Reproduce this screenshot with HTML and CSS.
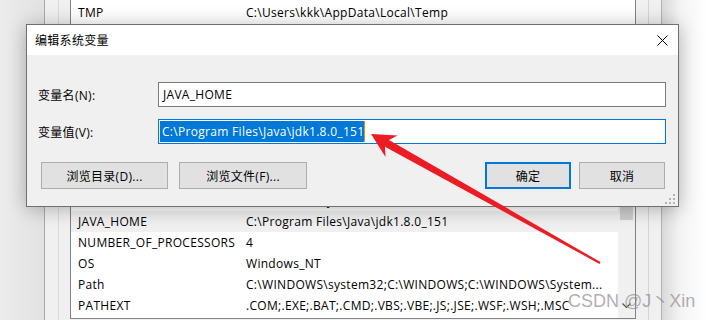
FILE: index.html
```html
<!DOCTYPE html>
<html lang="zh-CN">
<head>
    <meta charset="UTF-8">
    <title>编辑系统变量</title>
    <link rel="stylesheet" href="styles.css">
</head>
<body>

    <div class="screen">
        <div class="shade-left"></div>

        <div class="envwin">
            <div class="group">
                <div class="list user-list">
                    <div class="row"><span class="name">TMP</span><span class="value">C:\Users\kkk\AppData\Local\Temp</span></div>
                </div>

                <div class="list sys-list">
                    <div class="rows">
                        <div class="row"><span class="name">DriverData</span><span class="value">C:\Windows\System32\Drivers\DriverData</span></div>
                        <div class="row selected"><span class="name">JAVA_HOME</span><span class="value">C:\Program Files\Java\jdk1.8.0_151</span></div>
                        <div class="row"><span class="name">NUMBER_OF_PROCESSORS</span><span class="value">4</span></div>
                        <div class="row"><span class="name">OS</span><span class="value">Windows_NT</span></div>
                        <div class="row"><span class="name">Path</span><span class="value">C:\WINDOWS\system32;C:\WINDOWS;C:\WINDOWS\System...</span></div>
                        <div class="row"><span class="name">PATHEXT</span><span class="value">.COM;.EXE;.BAT;.CMD;.VBS;.VBE;.JS;.JSE;.WSF;.WSH;.MSC</span></div>
                    </div>
                    <div class="scrollbar">
                        <div class="thumb"></div>
                        <svg class="down" width="9" height="6" viewBox="0 0 9 6">
                            <path d="M0.5 0.5 L4.5 4.5 L8.5 0.5" fill="none" stroke="#505050" stroke-width="1.2"/>
                        </svg>
                    </div>
                </div>
            </div>
        </div>

        <div class="shade-right"></div>

        <div class="dialog">
            <div class="titlebar">
                <span class="title">编辑系统变量</span>
                <svg class="close" width="11" height="11" viewBox="0 0 11 11">
                    <path d="M0.5 0.5 L10.5 10.5 M10.5 0.5 L0.5 10.5" stroke="#000" stroke-width="1"/>
                </svg>
            </div>
            <div class="dialog-body">
                <div class="field">
                    <label>变量名(N):</label>
                    <div class="textbox">JAVA_HOME</div>
                </div>
                <div class="field">
                    <label>变量值(V):</label>
                    <div class="textbox focused"><span class="selection">C:\Program Files\Java\jdk1.8.0_151</span></div>
                </div>
                <div class="actions">
                    <button class="browse-dir">浏览目录(D)...</button>
                    <button class="browse-file">浏览文件(F)...</button>
                    <div class="spacer"></div>
                    <button class="ok">确定</button>
                    <button class="cancel">取消</button>
                </div>
            </div>
            <svg class="grip" width="10" height="10" viewBox="0 0 10 10">
                <rect x="8" y="0" width="2" height="2" fill="#b4b4b4"/>
                <rect x="4" y="4" width="2" height="2" fill="#b4b4b4"/>
                <rect x="8" y="4" width="2" height="2" fill="#b4b4b4"/>
                <rect x="0" y="8" width="2" height="2" fill="#b4b4b4"/>
                <rect x="4" y="8" width="2" height="2" fill="#b4b4b4"/>
                <rect x="8" y="8" width="2" height="2" fill="#b4b4b4"/>
            </svg>
        </div>

        <svg class="arrow" width="708" height="320" viewBox="0 0 708 320">
            <polygon points="371,134 397.5,135.6 389,140 600.5,262.1 599.5,263.9 385,146.8 385.5,157" fill="#ec1c24"/>
        </svg>

        <div class="watermark">CSDN @J丶Xin</div>
    </div>

</body>
</html>
```

FILE: styles.css
```css
body {
    margin: 0;
    font-family: "Open Sans", "Noto Sans CJK SC", sans-serif;
    font-size: 12px;
    letter-spacing: 0.3px;
    color: #000;
    background: #f0f0f0;
}
.screen {
    position: relative;
    display: flex;
    width: 708px;
    height: 320px;
    overflow: hidden;
}
.shade-left {
    width: 44px;
    background: linear-gradient(to right, #ececec, #e2e2e2);
}
.shade-right {
    width: 46px;
    background: linear-gradient(to right, #d9d9d9, #f4f4f4 40%, #ffffff);
}
.envwin {
    width: 618px;
    box-sizing: border-box;
    background: #f0f0f0;
    border-left: 1px solid #a9a9a9;
    border-right: 1px solid #b3b3b3;
    padding: 0 12px 0 13px;
}
.group {
    height: 100%;
    box-sizing: border-box;
    border-left: 1px solid #dadada;
    border-right: 1px solid #d4d4d4;
    padding: 0 12px 0 11px;
}
.list {
    background: #fff;
    border: 1px solid #828282;
    box-sizing: border-box;
}
.user-list {
    height: 128px;
    border-top: none;
    padding-top: 2px;
}
.sys-list {
    display: flex;
    margin-top: 19px;
    height: 172px;
}
.rows {
    flex: 1;
    overflow: hidden;
    padding-top: 42px;
}
.row {
    display: flex;
    height: 21px;
    line-height: 21px;
    white-space: nowrap;
    overflow: hidden;
}
.row.selected {
    background: #f0f0f0;
}
.name {
    width: 168px;
    padding-left: 7px;
    flex-shrink: 0;
}
.scrollbar {
    position: relative;
    width: 17px;
    background: #f0f0f0;
}
.thumb {
    margin: 14px 2px 0 2px;
    height: 58px;
    background: #cdcdcd;
}
.scrollbar .down {
    position: absolute;
    left: 4px;
    bottom: 9px;
}

.dialog {
    position: absolute;
    left: 26px;
    top: 24px;
    width: 653px;
    height: 183px;
    box-sizing: border-box;
    border: 1px solid #707070;
    background: #f0f0f0;
    box-shadow: 0 2px 18px rgba(0, 0, 0, 0.28);
}
.titlebar {
    display: flex;
    align-items: center;
    justify-content: space-between;
    height: 30px;
    background: #fff;
    padding: 0 10px 0 8px;
}
.dialog-body {
    padding: 27px 12px 17px 11px;
}
.field {
    display: flex;
    align-items: center;
    margin-bottom: 12px;
}
.field label {
    width: 120px;
}
.textbox {
    flex: 1;
    height: 25px;
    box-sizing: border-box;
    border: 1px solid #7a7a7a;
    background: #fff;
    line-height: 23px;
    padding-left: 4px;
    white-space: nowrap;
}
.textbox.focused {
    border-color: #0078d7;
    padding-left: 1px;
}
.selection {
    display: inline-block;
    height: 21px;
    line-height: 21px;
    margin-top: 1px;
    vertical-align: top;
    padding-left: 2px;
    background: #0078d7;
    color: #fff;
    border-right: 1px solid #ff8a00;
}
.actions {
    display: flex;
    margin-top: 18px;
    padding-left: 3px;
    padding-right: 1px;
}
.actions button {
    height: 27px;
    box-sizing: border-box;
    background: #e1e1e1;
    border: 1px solid #adadad;
    font-family: inherit;
    font-size: 12px;
    letter-spacing: inherit;
    color: #000;
    padding: 0;
}
.browse-dir {
    width: 127px;
    margin-right: 11px;
}
.browse-file {
    width: 128px;
}
.spacer {
    flex: 1;
}
.ok, .cancel {
    width: 86px;
}
.actions .ok {
    border: 2px solid #0078d7;
    margin-right: 8px;
}
.grip {
    position: absolute;
    right: 3px;
    bottom: 2px;
}

.arrow {
    position: absolute;
    left: 0;
    top: 0;
    pointer-events: none;
}
.watermark {
    position: absolute;
    left: 568px;
    top: 289px;
    font-family: "Liberation Sans", "Noto Sans CJK SC", sans-serif;
    font-size: 18px;
    letter-spacing: 0;
    line-height: 24px;
    color: rgba(140, 140, 140, 0.7);
    white-space: nowrap;
}
```
